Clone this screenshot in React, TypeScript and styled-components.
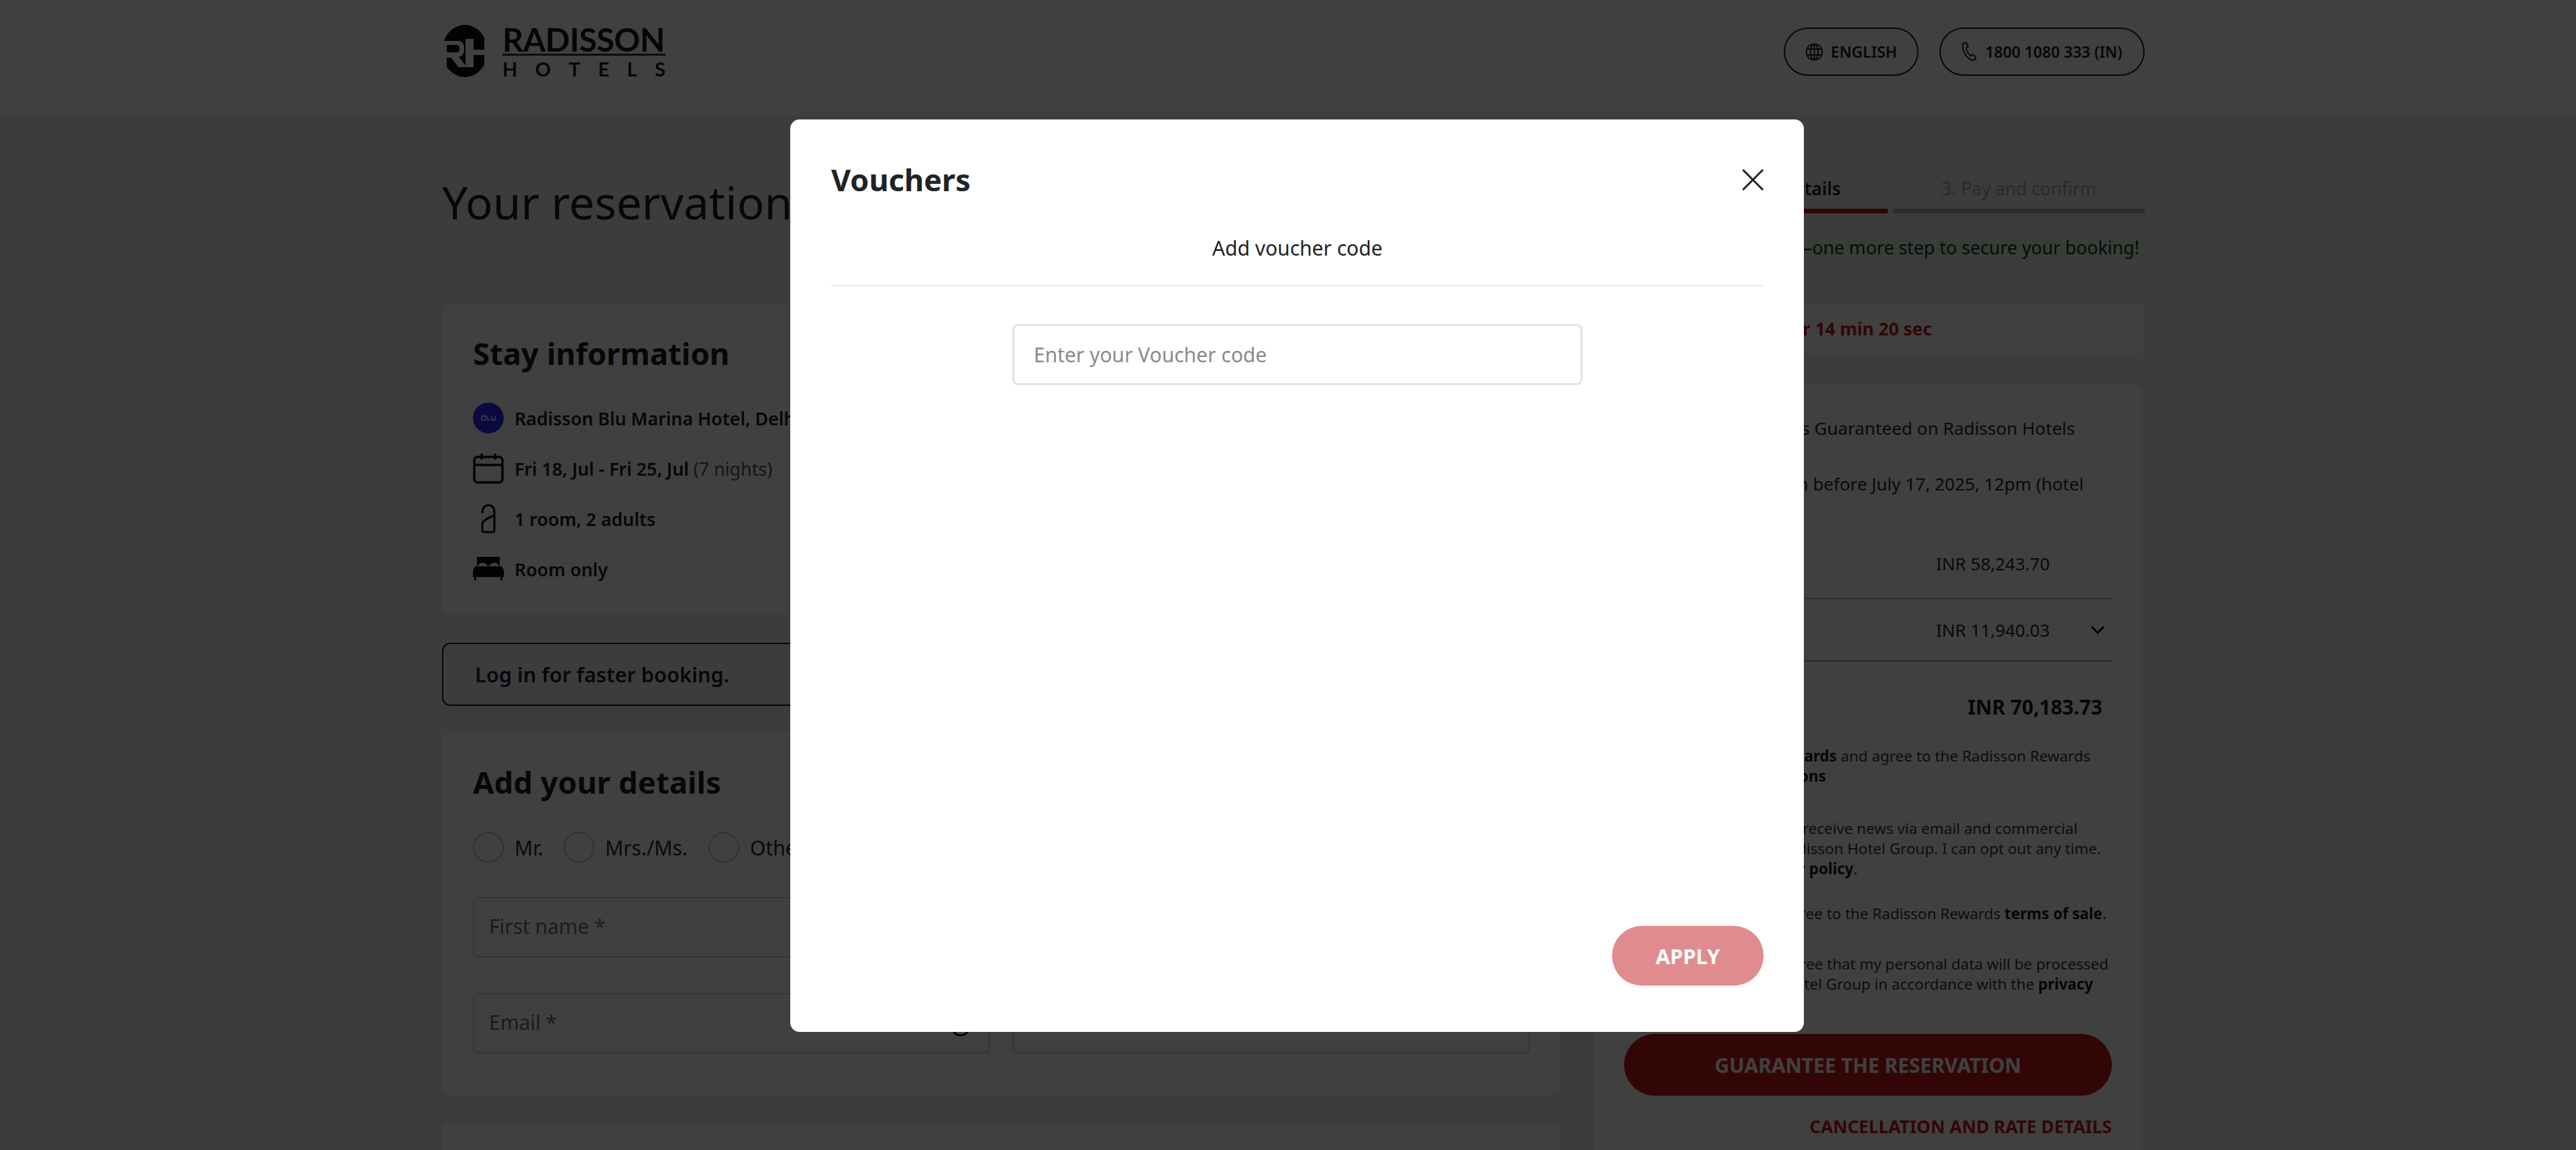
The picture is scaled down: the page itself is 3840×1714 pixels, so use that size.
import React from "react";
import styled, { createGlobalStyle } from "styled-components";

const DARK = "#1a1d21";
const RED = "#c8191d";

const GlobalStyle = createGlobalStyle`
  html, body {
    margin: 0;
    padding: 0;
    width: 3840px;
    height: 1714px;
    overflow: hidden;
    background: #f0f0f0;
    font-family: "Noto Sans", "Open Sans", sans-serif;
    color: ${DARK};
  }
  * { box-sizing: border-box; }
`;

const Header = styled.header`
  height: 172px;
  background: #fff;
`;

const HeaderInner = styled.div`
  width: 2538px;
  height: 100%;
  margin-left: 659px;
  padding-top: 37px;
  display: flex;
  justify-content: space-between;
  align-items: flex-start;
`;

const LogoWrap = styled.div`
  display: flex;
  gap: 22px;
  align-items: flex-start;
`;

const WordMark = styled.div`
  width: 243px;
  display: flex;
  flex-direction: column;
  font-family: "Lato", sans-serif;
  font-weight: 700;
  color: #14181d;
`;

const WordTop = styled.div`
  height: 46px;
  font-size: 48.5px;
  line-height: 42px;
  letter-spacing: -0.5px;
  white-space: nowrap;
  border-bottom: 3px solid #33363a;
`;

const WordBottom = styled.div`
  margin-top: 3px;
  display: flex;
  justify-content: space-between;
  font-size: 29px;
  line-height: 34px;
`;

const HeaderActions = styled.div`
  display: flex;
  gap: 31px;
  margin-top: 4px;
`;

const Pill = styled.div<{ $w: number }>`
  width: ${(p) => p.$w}px;
  height: 72px;
  border: 2px solid ${DARK};
  border-radius: 36px;
  display: flex;
  align-items: center;
  justify-content: center;
  gap: 11px;
  font-size: 23px;
  font-weight: 600;
  white-space: nowrap;
`;

const Main = styled.main`
  width: 2538px;
  margin-left: 659px;
  display: grid;
  grid-template-columns: 1667px 821px;
  column-gap: 50px;
`;

const LeftColumn = styled.div`
  display: flex;
  flex-direction: column;
`;

const PageTitle = styled.h1`
  margin: 79px 0 0;
  height: 202px;
  font-size: 67.5px;
  line-height: 100px;
  font-weight: 400;
  color: ${DARK};
`;

const Card = styled.section<{ $h: number }>`
  height: ${(p) => p.$h}px;
  background: #fff;
  border-radius: 12px;
  padding: 46px 46px;
`;

const CardTitle = styled.h2`
  margin: 0;
  font-size: 45.5px;
  line-height: 54px;
  font-weight: 700;
`;

const InfoList = styled.div`
  margin-top: 47px;
  display: flex;
  flex-direction: column;
  gap: 29px;
`;

const InfoRow = styled.div`
  height: 46px;
  display: flex;
  align-items: center;
  gap: 16px;
  font-size: 26.8px;
  font-weight: 600;
  white-space: nowrap;
`;

const Muted = styled.span`
  font-weight: 400;
  color: #55585c;
`;

const IconSlot = styled.span`
  width: 46px;
  height: 46px;
  display: flex;
  align-items: center;
  justify-content: center;
  flex-shrink: 0;
`;

const LoginBox = styled.div`
  margin-top: 42px;
  height: 94px;
  padding-left: 47px;
  border: 2px solid ${DARK};
  border-radius: 12px;
  display: flex;
  align-items: center;
  font-size: 30.8px;
  font-weight: 600;
  color: #1d1d33;
`;

const DetailsGap = styled.div`
  height: 40px;
`;

const RadioRow = styled.div`
  margin-top: 48px;
  display: flex;
  align-items: center;
  font-size: 30px;
  color: #25282c;
`;

const Radio = styled.span<{ $gap: number }>`
  width: 46px;
  height: 46px;
  border: 2px solid #c8c8c8;
  border-radius: 50%;
  margin-right: ${(p) => p.$gap}px;
`;

const RadioLabel = styled.span<{ $w: number }>`
  width: ${(p) => p.$w}px;
  white-space: nowrap;
`;

const FieldRow = styled.div<{ $top: number }>`
  margin-top: ${(p) => p.$top}px;
  display: grid;
  grid-template-columns: 771px 772px;
  column-gap: 33px;
`;

const Field = styled.div`
  position: relative;
  height: 90px;
  border: 2px solid #d2d2d2;
  border-radius: 8px;
  padding: 0 0 4px 22px;
  display: flex;
  align-items: center;
  font-size: 30px;
  color: #6c6f73;
`;

const FieldIcon = styled.span`
  position: absolute;
  top: 33px;
  right: 27px;
  display: flex;
`;

const SecondCard = styled.section`
  margin-top: 41px;
  height: 400px;
  background: #fff;
  border-radius: 12px;
`;

const RightColumn = styled.aside`
  padding-top: 87px;
  display: flex;
  flex-direction: column;
`;

const Steps = styled.div`
  display: grid;
  grid-template-columns: 1fr 375px;
  column-gap: 8px;
`;

const Step = styled.div<{ $active?: boolean }>`
  height: 59px;
  padding-bottom: 9px;
  padding-left: ${(p) => (p.$active ? 59 : 0)}px;
  display: flex;
  align-items: center;
  justify-content: center;
  border-bottom: 7px solid ${(p) => (p.$active ? RED : "#b0b0b0")};
  font-size: 26.4px;
  font-weight: ${(p) => (p.$active ? 600 : 400)};
  color: ${(p) => (p.$active ? DARK : "#a6a6a6")};
  white-space: nowrap;
`;

const Notice = styled.div`
  margin-top: 30px;
  height: 41px;
  background: #dff3dc;
  border-radius: 6px;
  padding-right: 8px;
  display: flex;
  align-items: center;
  justify-content: flex-end;
  font-size: 26.8px;
  color: #25282c;
  white-space: nowrap;
`;

const TimerCard = styled.div`
  margin-top: 64px;
  height: 75px;
  background: #fff;
  border-radius: 12px;
  padding: 0 317px 2px 0;
  display: flex;
  align-items: center;
  justify-content: flex-end;
  font-size: 26.4px;
  font-weight: 700;
  color: ${RED};
  white-space: nowrap;
`;

const SummaryCard = styled.div`
  margin: 46px 3px 0 0;
  height: 1200px;
  background: #fff;
  border-radius: 12px 12px 0 0;
  padding: 0 46px 0 45px;
  display: flex;
  flex-direction: column;
`;

const BenefitLine = styled.p<{ $top: number; $right: number }>`
  margin: ${(p) => p.$top}px ${(p) => p.$right}px 0 0;
  height: 40px;
  font-size: 26.2px;
  line-height: 40px;
  text-align: right;
  color: #25282c;
  white-space: nowrap;
`;

const PriceRow = styled.div<{ $h: number; $pad: number }>`
  height: ${(p) => p.$h}px;
  padding-top: ${(p) => p.$pad}px;
  display: grid;
  grid-template-columns: 465px 171px 1fr;
  align-items: center;
  font-size: 26px;
  color: #25282c;
  white-space: nowrap;
`;

const PriceRule = styled.div`
  border-bottom: 2px solid #b5b5b5;
`;

const Chevron = styled.span`
  display: flex;
  justify-content: flex-end;
  padding-right: 10px;
`;

const TotalRow = styled.div`
  height: 88px;
  margin-top: 23px;
  padding-right: 14px;
  display: flex;
  align-items: center;
  justify-content: flex-end;
  font-size: 30px;
  font-weight: 700;
`;

const LegalBlock = styled.div<{ $top: number }>`
  margin-top: ${(p) => p.$top}px;
`;

const LegalLine = styled.p<{ $right: number }>`
  margin: 0;
  padding-right: ${(p) => p.$right}px;
  height: 30px;
  font-size: 22.5px;
  line-height: 30px;
  text-align: right;
  color: #35383c;
  white-space: nowrap;
  b {
    font-weight: 700;
    color: #17191c;
  }
`;

const GuaranteeButton = styled.div`
  margin-top: 29px;
  height: 92px;
  background: ${RED};
  border-radius: 46px;
  display: flex;
  align-items: center;
  justify-content: center;
  color: #fff;
  font-size: 30px;
  font-weight: 700;
  white-space: nowrap;
`;

const CancelLink = styled.div`
  margin-top: 28px;
  text-align: right;
  font-size: 26.4px;
  font-weight: 700;
  color: ${RED};
  white-space: nowrap;
`;

const Backdrop = styled.div`
  position: fixed;
  inset: 0;
  background: rgba(0, 0, 0, 0.75);
`;

const Modal = styled.div`
  position: fixed;
  left: 1178px;
  top: 178px;
  width: 1511px;
  height: 1360px;
  background: #fff;
  border-radius: 14px;
  padding: 0 60px 0 61px;
  display: flex;
  flex-direction: column;
`;

const ModalHead = styled.div`
  height: 150px;
  padding-top: 54px;
  display: flex;
  justify-content: space-between;
  align-items: flex-start;
`;

const ModalTitle = styled.h2`
  margin: 0;
  font-size: 45px;
  line-height: 72px;
  font-weight: 700;
  color: #212326;
`;

const CloseButton = styled.button`
  border: 0;
  padding: 0;
  margin-top: 20px;
  background: none;
  display: flex;
`;

const TabLabel = styled.div`
  height: 99px;
  border-bottom: 3px solid #f0f0f0;
  text-align: center;
  font-size: 30px;
  line-height: 84px;
  color: #212326;
`;

const VoucherInput = styled.input`
  display: block;
  width: 850px;
  height: 91px;
  margin: 56px auto 0;
  padding: 0 29px;
  border: 3px solid #e2e2e2;
  border-radius: 8px;
  font-family: inherit;
  font-size: 30px;
  color: #212326;
  outline: none;
  &::placeholder {
    color: #8a8a8a;
    opacity: 1;
  }
`;

const ModalFooter = styled.div`
  margin-top: auto;
  padding-bottom: 69px;
  display: flex;
  justify-content: flex-end;
`;

const ApplyButton = styled.button`
  width: 226px;
  height: 89px;
  border: 0;
  border-radius: 45px;
  background: #e08c8e;
  color: #fff;
  font-family: inherit;
  font-size: 31px;
  font-weight: 700;
`;

const RhLogo = () => (
  <svg width="68" height="78" viewBox="0 0 68 78">
    <ellipse cx="34" cy="39" rx="34" ry="39" fill="#0b0e12" />
    <path
      fill="#fff"
      fillRule="evenodd"
      d="M-1 24H24Q33 24 33 36Q33 46 25 48L37 63H24L14 49H7V63H-1ZM7 30V41H22Q26 41 26 35.500Q26 30 22 30Z"
    />
    <path fill="#fff" d="M35 21H47V37H63V21H69V63H63V45H47V63H35Z" />
  </svg>
);

const GlobeIcon = () => (
  <svg width="27" height="27" viewBox="0 0 24 24" fill="none" stroke={DARK} strokeWidth="1.7">
    <circle cx="12" cy="12" r="10.5" />
    <ellipse cx="12" cy="12" rx="5" ry="10.5" />
    <path d="M12 1.5v21M2 8h20M2 16h20" />
  </svg>
);

const PhoneIcon = () => (
  <svg width="24" height="30" viewBox="0 0 24 30" fill="none" stroke={DARK} strokeWidth="2">
    <path d="M4 2 1.5 4c-.5 9 5 20 14 24l5-1.500c1-.5 1-1.500.5-2.500l-3-4c-.5-.7-1.500-.8-2.200-.3l-2 1.300C10 18 7.500 13.500 7 9.500l2-1.300c.7-.5.8-1.300.5-2L7 2C6.500 1.300 5 1.300 4 2Z" />
  </svg>
);

const BluBadge = () => (
  <svg width="46" height="46" viewBox="0 0 46 46">
    <circle cx="23" cy="23" r="23" fill="#2f28ff" />
    <path d="M13 20h6v6h-6zM22 20v6h3M28 20v6h5v-6" fill="none" stroke="#fff" strokeWidth="1.400" />
  </svg>
);

const CalendarIcon = () => (
  <svg width="46" height="46" viewBox="0 0 46 46" fill="none" stroke="#0d0f12" strokeWidth="3.500">
    <rect x="2" y="6" width="42" height="38" rx="5" />
    <path d="M2 18h42M13 1v9M33 1v9" />
  </svg>
);

const HangerIcon = () => (
  <svg width="24" height="44" viewBox="0 0 24 44" fill="none" stroke="#0d0f12" strokeWidth="3">
    <path d="M3 14C3 6 6 2 12 2s9 4 9 10v27c0 2-1 3-3 3H6c-2 0-3-1-3-3v-9c0-4 4-7 18-13" />
  </svg>
);

const BedIcon = () => (
  <svg width="46" height="36" viewBox="0 0 46 36" fill="#0d0f12">
    <path d="M6 0h34v13h-2c-1-3-2-4-6-4s-6 1-7 4h-4c-1-3-3-4-7-4s-5 1-6 4H6V0ZM3 14h40l3 6v10h-2v5h-3v-5H5v5H2v-5H0V20l3-6Z" />
  </svg>
);

const InfoIcon = () => (
  <svg width="30" height="30" viewBox="0 0 30 30" fill="none" stroke="#0d0f12" strokeWidth="3">
    <circle cx="15" cy="15" r="13" />
    <path d="M15 13v9M15 8v2" />
  </svg>
);

const App: React.FC = () => {
  return (
    <>
      <GlobalStyle />
      <Header>
        <HeaderInner>
          <LogoWrap>
            <RhLogo />
            <WordMark>
              <WordTop>RADISSON</WordTop>
              <WordBottom>
                {"HOTELS".split("").map((c, idx) => (
                  <span key={idx}>{c}</span>
                ))}
              </WordBottom>
            </WordMark>
          </LogoWrap>
          <HeaderActions>
            <Pill $w={201}>
              <GlobeIcon />
              ENGLISH
            </Pill>
            <Pill $w={306}>
              <PhoneIcon />
              1800 1080 333 (IN)
            </Pill>
          </HeaderActions>
        </HeaderInner>
      </Header>

      <Main>
        <LeftColumn>
          <PageTitle>Your reservation</PageTitle>
          <Card $h={463}>
            <CardTitle>Stay information</CardTitle>
            <InfoList>
              <InfoRow>
                <IconSlot>
                  <BluBadge />
                </IconSlot>
                Radisson Blu Marina Hotel, Delhi
              </InfoRow>
              <InfoRow>
                <IconSlot>
                  <CalendarIcon />
                </IconSlot>
                <span>
                  Fri 18, Jul - Fri 25, Jul <Muted>(7 nights)</Muted>
                </span>
              </InfoRow>
              <InfoRow>
                <IconSlot>
                  <HangerIcon />
                </IconSlot>
                1 room, 2 adults
              </InfoRow>
              <InfoRow>
                <IconSlot>
                  <BedIcon />
                </IconSlot>
                Room only
              </InfoRow>
            </InfoList>
          </Card>
          <LoginBox>Log in for faster booking.</LoginBox>
          <DetailsGap />
          <Card $h={540}>
            <CardTitle>Add your details</CardTitle>
            <RadioRow>
              <Radio $gap={16} />
              <RadioLabel $w={73}>Mr.</RadioLabel>
              <Radio $gap={16} />
              <RadioLabel $w={154}>Mrs./Ms.</RadioLabel>
              <Radio $gap={16} />
              <RadioLabel $w={120}>Other</RadioLabel>
            </RadioRow>
            <FieldRow $top={51}>
              <Field>First name *</Field>
              <Field>Last name *</Field>
            </FieldRow>
            <FieldRow $top={53}>
              <Field>
                Email *
                <FieldIcon>
                  <InfoIcon />
                </FieldIcon>
              </Field>
              <Field>Phone *</Field>
            </FieldRow>
          </Card>
          <SecondCard />
        </LeftColumn>

        <RightColumn>
          <Steps>
            <Step $active>2. Add your details</Step>
            <Step>3. Pay and confirm</Step>
          </Steps>
          <Notice>You're almost there—one more step to secure your booking!</Notice>
          <TimerCard>Price held for 14 min 20 sec</TimerCard>
          <SummaryCard>
            <BenefitLine $top={44} $right={55}>
              Best Rates Guaranteed on Radisson Hotels
            </BenefitLine>
            <BenefitLine $top={43} $right={42}>
              Free cancellation before July 17, 2025, 12pm (hotel
            </BenefitLine>
            <PriceRow $h={150} $pad={48}>
              <span>Room price</span>
              <span>INR 58,243.70</span>
            </PriceRow>
            <PriceRule />
            <PriceRow $h={91} $pad={0}>
              <span>Taxes and fees</span>
              <span>INR 11,940.03</span>
              <Chevron>
                <svg width="22" height="14" viewBox="0 0 22 14" fill="none" stroke="#0d0f12" strokeWidth="3">
                  <path d="m2 2 9 9 9-9" />
                </svg>
              </Chevron>
            </PriceRow>
            <PriceRule />
            <TotalRow>INR 70,183.73</TotalRow>
            <LegalBlock $top={15}>
              <LegalLine $right={32}>
                I join <b>Radisson Rewards</b> and agree to the Radisson Rewards
              </LegalLine>
              <LegalLine $right={426}>
                <b>terms and conditions</b>
              </LegalLine>
            </LegalBlock>
            <LegalBlock $top={48}>
              <LegalLine $right={51}>I would like to receive news via email and commercial</LegalLine>
              <LegalLine $right={16}>offers from Radisson Hotel Group. I can opt out any time.</LegalLine>
              <LegalLine $right={379}>
                See our <b>privacy policy</b>.
              </LegalLine>
            </LegalBlock>
            <LegalBlock $top={37}>
              <LegalLine $right={8}>
                I agree to the Radisson Rewards <b>terms of sale</b>.
              </LegalLine>
            </LegalBlock>
            <LegalBlock $top={45}>
              <LegalLine $right={5}>I agree that my personal data will be processed</LegalLine>
              <LegalLine $right={28}>
                by Radisson Hotel Group in accordance with the <b>privacy</b>
              </LegalLine>
              <LegalLine $right={500}>
                <b>policy</b>.
              </LegalLine>
            </LegalBlock>
            <GuaranteeButton>GUARANTEE THE RESERVATION</GuaranteeButton>
            <CancelLink>CANCELLATION AND RATE DETAILS</CancelLink>
          </SummaryCard>
        </RightColumn>
      </Main>

      <Backdrop />
      <Modal>
        <ModalHead>
          <ModalTitle>Vouchers</ModalTitle>
          <CloseButton aria-label="Close">
            <svg width="32" height="32" viewBox="0 0 32 32" fill="none" stroke="#212326" strokeWidth="3">
              <path d="m1 1 30 30M31 1 1 31" />
            </svg>
          </CloseButton>
        </ModalHead>
        <TabLabel>Add voucher code</TabLabel>
        <VoucherInput placeholder="Enter your Voucher code" />
        <ModalFooter>
          <ApplyButton>APPLY</ApplyButton>
        </ModalFooter>
      </Modal>
    </>
  );
};

export default App;
